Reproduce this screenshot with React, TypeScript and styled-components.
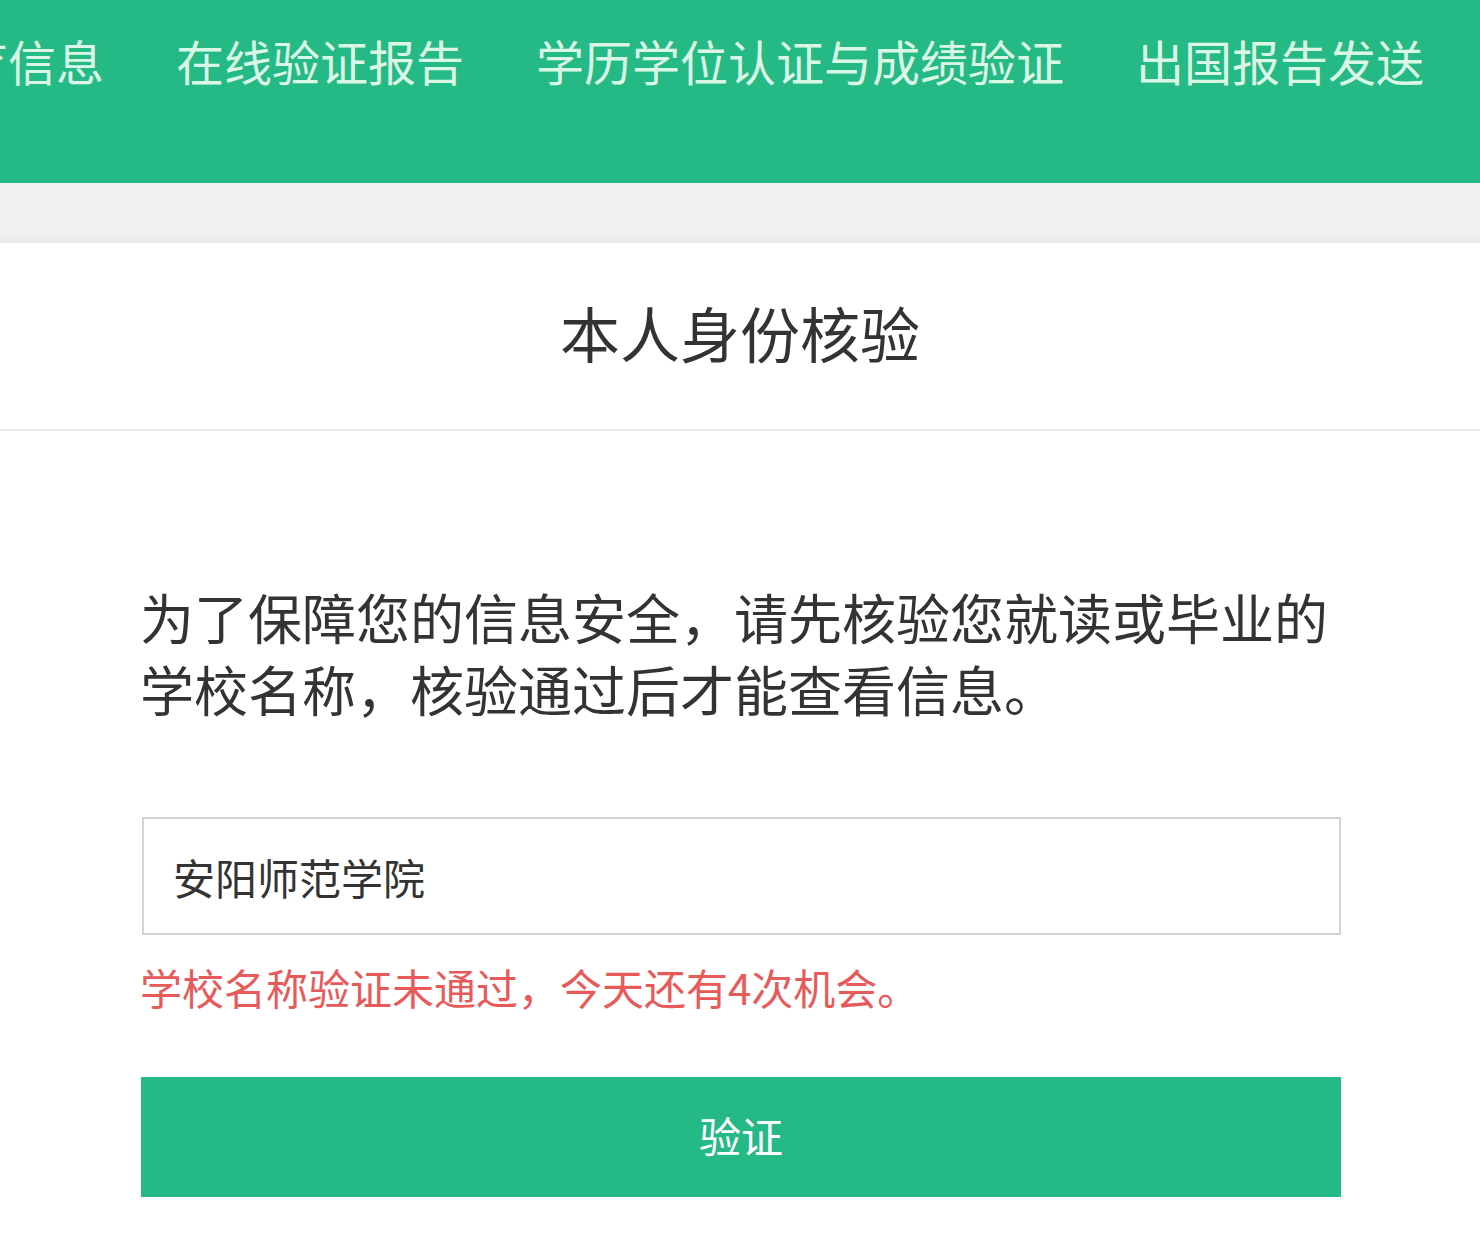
import React from "react";
import styled, { createGlobalStyle } from "styled-components";

const GlobalStyle = createGlobalStyle`
  html, body {
    margin: 0;
    padding: 0;
    background: #ffffff;
  }
  body {
    font-family: "Noto Sans CJK SC", "Noto Sans", sans-serif;
    color: #333333;
    overflow-x: hidden;
  }
`;

const navItems = ["高等教育信息", "在线验证报告", "学历学位认证与成绩验证", "出国报告发送", "更多服务"];

export default function App() {
  return (
    <>
      <GlobalStyle />
      <Page>
        <Header>
          <Nav>
            {navItems.map((item) => (
              <NavItem key={item}>{item}</NavItem>
            ))}
          </Nav>
        </Header>
        <GrayBand />
        <Card>
          <TitleBar>
            <Title>本人身份核验</Title>
          </TitleBar>
          <Body>
            <Intro>
              为了保障您的信息安全，请先核验您就读或毕业的学校名称，核验通过后才能查看信息。
            </Intro>
            <SchoolInput type="text" defaultValue="安阳师范学院" />
            <ErrorText>学校名称验证未通过，今天还有4次机会。</ErrorText>
            <SubmitButton type="button">验证</SubmitButton>
          </Body>
        </Card>
      </Page>
    </>
  );
}

// 页面
const Page = styled.div`
  width: 1480px;
  min-height: 1254px;
  background: #ffffff;
`;

// 顶部导航
const Header = styled.header`
  height: 183px;
  background-color: #25b986;
  overflow: hidden;
`;

const Nav = styled.nav`
  display: flex;
  align-items: center;
  gap: 72px;
  margin-left: -184px;
  padding-top: 26px;
  white-space: nowrap;
`;

const NavItem = styled.a`
  font-size: 48px;
  line-height: 68px;
  color: #d9f7e4;
  text-decoration: none;
  flex-shrink: 0;
`;

const GrayBand = styled.div`
  height: 60px;
  background: linear-gradient(to bottom, #f0f0f0 0, #f0f0f0 48px, #e9ebea 60px);
`;

// 核验卡片
const Card = styled.section`
  background: #ffffff;
`;

const TitleBar = styled.div`
  height: 186px;
  display: flex;
  align-items: center;
  justify-content: center;
  border-bottom: 2px solid #e8e8e8;
`;

const Title = styled.h1`
  margin: 0;
  padding-bottom: 10px;
  font-size: 60px;
  font-weight: 400;
  color: #333333;
`;

const Body = styled.div`
  width: 1201px;
  margin-left: 140px;
  padding-top: 150px;
  display: flex;
  flex-direction: column;
`;

const Intro = styled.p`
  margin: 0 0 92px;
  font-size: 54px;
  line-height: 72px;
  color: #333333;
`;

const SchoolInput = styled.input`
  box-sizing: border-box;
  width: 1199px;
  height: 118px;
  margin-left: 2px;
  padding: 0 29px;
  border: 2px solid #d3d3d3;
  border-radius: 0;
  font-family: "Noto Sans CJK SC", "Noto Sans", sans-serif;
  font-size: 42px;
  color: #333333;
  outline: none;
`;

const ErrorText = styled.div`
  margin-top: 22px;
  font-size: 42px;
  line-height: 60px;
  color: #e85a5a;
`;

const SubmitButton = styled.button`
  margin-top: 60px;
  margin-left: 1px;
  width: 1200px;
  height: 120px;
  padding: 0 0 6px;
  border: none;
  border-radius: 0;
  background-color: #25b986;
  color: #ffffff;
  font-family: "Noto Sans CJK SC", "Noto Sans", sans-serif;
  font-size: 42px;
  cursor: pointer;
`;
